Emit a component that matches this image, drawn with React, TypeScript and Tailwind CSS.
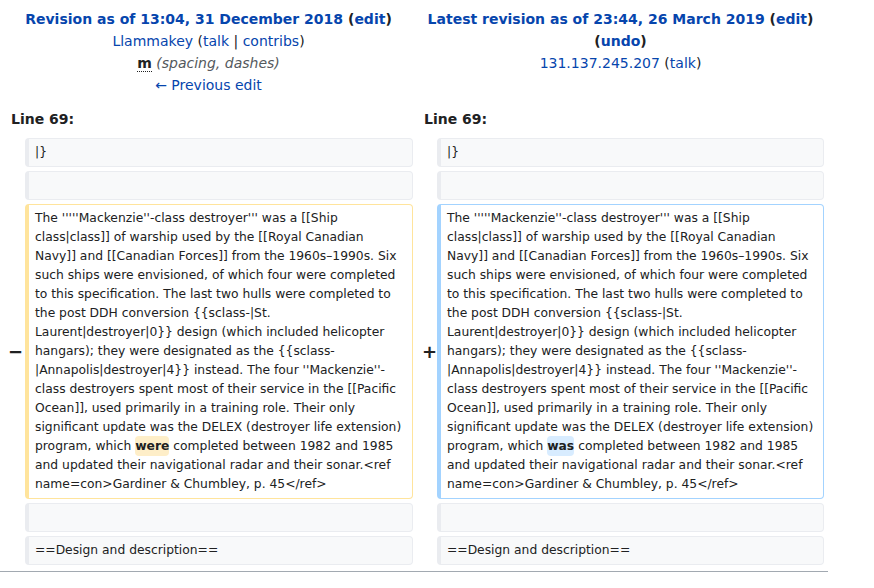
import React from "react";

const L = "text-[#0645ad]";

function Box({
  kind,
  children,
}: {
  kind: "ctx" | "del" | "add";
  children?: React.ReactNode;
}) {
  const cls =
    kind === "ctx"
      ? "bg-[#f8f9fa] border-[#eaecf0]"
      : kind === "del"
      ? "bg-white border-[#ffe49c]"
      : "bg-white border-[#a3d3ff]";
  return (
    <div
      className={`border border-l-4 rounded-[4px] pl-[6px] pr-[6px] py-[4px] text-[12.32px] leading-[19px] break-words ${cls}`}
    >
      {children ?? "\u00a0"}
    </div>
  );
}

function Para({ word, kind }: { word: string; kind: "del" | "add" }) {
  const hl = kind === "del" ? "bg-[#feeec8]" : "bg-[#d8ecff]";
  return (
    <>
      The '''''Mackenzie''-class destroyer''' was a [[Ship class|class]] of
      warship used by the [[Royal Canadian Navy]] and [[Canadian Forces]] from
      the 1960s–1990s. Six such ships were envisioned, of which four were
      completed to this specification. The last two hulls were completed to the
      post DDH conversion {"{{sclass-|St. Laurent|destroyer|0}}"} design (which
      included helicopter hangars); they were designated as the{" "}
      {"{{sclass-|Annapolis|destroyer|4}}"} instead. The four ''Mackenzie''-class
      destroyers spent most of their service in the [[Pacific Ocean]], used
      primarily in a training role. Their only significant update was the DELEX
      (destroyer life extension) program, which{" "}
      <span className={`font-bold rounded-[4px] py-[3px] ${hl}`}>{word}</span>{" "}
      completed between 1982 and 1985 and updated their navigational radar and
      their sonar.{"<ref name=con>Gardiner & Chumbley, p. 45</ref>"}
    </>
  );
}

export default function App() {
  return (
    <div className="w-[828px] font-['DejaVu_Sans',sans-serif] text-[#202122] bg-white">
      {/* headers */}
      <div className="grid grid-cols-[409px_407px] gap-x-[4px] px-[4px] pt-[8px] text-[14px] leading-[22px] text-center">
        <div>
          <div className="font-bold">
            <span className={L}>Revision as of 13:04, 31 December 2018</span> (
            <span className={L}>edit</span>)
          </div>
          <div>
            <span className={L}>Llammakey</span> (<span className={L}>talk</span> |{" "}
            <span className={L}>contribs</span>)
          </div>
          <div>
            <abbr className="font-bold no-underline border-b border-dotted border-[#202122]">m</abbr>{" "}
            <span className="italic text-[#54595d]">(spacing, dashes)</span>
          </div>
          <div>
            <span className={L}>← Previous edit</span>
          </div>
        </div>
        <div>
          <div className="font-bold">
            <span className={L}>Latest revision as of 23:44, 26 March 2019</span> (
            <span className={L}>edit</span>)
          </div>
          <div className="font-bold">
            (<span className={L}>undo</span>)
          </div>
          <div>
            <span className={L}>131.137.245.207</span> (<span className={L}>talk</span>)
          </div>
        </div>
      </div>

      {/* line numbers */}
      <div className="grid grid-cols-[409px_407px] gap-x-[4px] px-[4px] mt-[12px] text-[14px] leading-[22px] font-bold">
        <div className="pl-[7px]">Line 69:</div>
        <div className="pl-[7px]">Line 69:</div>
      </div>

      {/* diff rows */}
      <div className="grid grid-cols-[25px_388px_24px_387px] gap-y-[4px] mt-[8px]">
        <div />
        <Box kind="ctx">|{"}"}</Box>
        <div />
        <Box kind="ctx">|{"}"}</Box>

        <div />
        <Box kind="ctx" />
        <div />
        <Box kind="ctx" />

        <div className="flex items-center justify-end pr-[2px] text-[18px] font-bold">−</div>
        <Box kind="del">
          <Para word="were" kind="del" />
        </Box>
        <div className="flex items-center justify-end pr-[0px] text-[18px] font-bold">+</div>
        <Box kind="add">
          <Para word="was" kind="add" />
        </Box>

        <div />
        <Box kind="ctx" />
        <div />
        <Box kind="ctx" />

        <div />
        <Box kind="ctx">==Design and description==</Box>
        <div />
        <Box kind="ctx">==Design and description==</Box>
      </div>

      <div className="mt-[6px] h-px bg-[#a2a9b1]" />
    </div>
  );
}
